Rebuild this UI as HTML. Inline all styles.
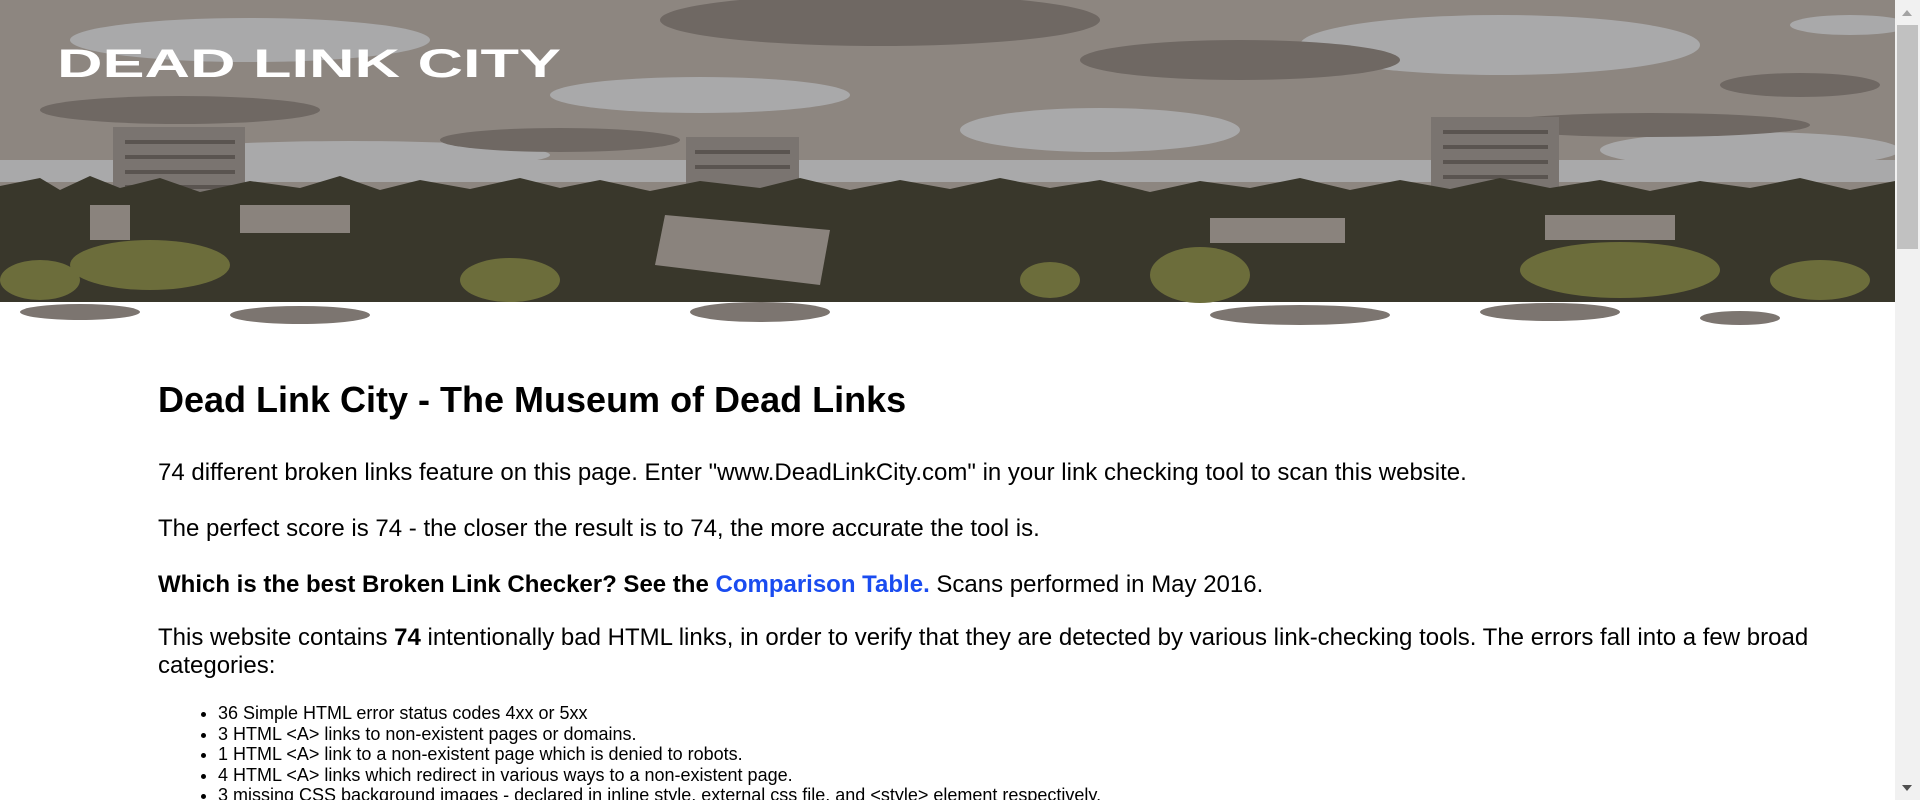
<!DOCTYPE html>
<html><head><meta charset="utf-8">
<style>
html,body{margin:0;padding:0;background:#fff;overflow:hidden}
body{width:1920px;height:800px;position:relative;font-family:"Liberation Sans",Arial,sans-serif;color:#000}
#hdr{position:absolute;left:0;top:0;width:1895px;height:335px}
#sb{position:absolute;left:1895px;top:0;width:25px;height:800px;background:#f1f1f1}
#thumb{position:absolute;left:2px;top:25px;width:21px;height:224px;background:#c1c1c1}
.au{position:absolute;left:7px;top:10px;width:0;height:0;border-left:5px solid transparent;border-right:5px solid transparent;border-bottom:6px solid #a3a3a3}
.ad{position:absolute;left:7px;top:785px;width:0;height:0;border-left:5px solid transparent;border-right:5px solid transparent;border-top:6px solid #505050}
#c{position:absolute;left:158px;top:380px;width:1700px}
h1{font-size:36px;line-height:40px;margin:0 0 39px 0;font-weight:bold}
p{font-size:24px;line-height:28px;margin:0 0 28px 0}
a{color:#1a4cf0;text-decoration:none}
ul{margin:23px 0 0 0;padding-left:60px;font-size:18px;line-height:20.5px}
li{margin:0}
</style></head><body>
<svg id="hdr" viewBox="0 0 1895 335" xmlns="http://www.w3.org/2000/svg">
<rect width="1895" height="335" fill="#fff"/>
<rect width="1895" height="200" fill="#8d8680"/>
<g fill="#a9a9aa">
<ellipse cx="250" cy="40" rx="180" ry="22"/>
<ellipse cx="1500" cy="45" rx="200" ry="30"/>
<ellipse cx="1100" cy="130" rx="140" ry="22"/>
<ellipse cx="700" cy="95" rx="150" ry="18"/>
<ellipse cx="1750" cy="150" rx="150" ry="18"/>
<ellipse cx="350" cy="155" rx="200" ry="14"/>
<ellipse cx="1850" cy="25" rx="60" ry="10"/>
<rect x="0" y="160" width="1895" height="22"/>
</g>
<g fill="#6f6863">
<ellipse cx="880" cy="20" rx="220" ry="26"/>
<ellipse cx="1240" cy="60" rx="160" ry="20"/>
<ellipse cx="180" cy="110" rx="140" ry="14"/>
<ellipse cx="1650" cy="125" rx="160" ry="12"/>
<ellipse cx="560" cy="140" rx="120" ry="12"/>
<ellipse cx="1800" cy="85" rx="80" ry="12"/>
</g>
<g fill="#7a7470">
<rect x="113" y="127" width="132" height="100"/>
<rect x="686" y="137" width="113" height="80"/>
<rect x="1431" y="117" width="128" height="110"/>
</g>
<g fill="#5a5450">
<rect x="125" y="140" width="110" height="4"/><rect x="125" y="155" width="110" height="4"/><rect x="125" y="170" width="110" height="4"/><rect x="125" y="185" width="110" height="4"/>
<rect x="1443" y="130" width="105" height="4"/><rect x="1443" y="145" width="105" height="4"/><rect x="1443" y="160" width="105" height="4"/><rect x="1443" y="175" width="105" height="4"/>
<rect x="695" y="150" width="95" height="4"/><rect x="695" y="165" width="95" height="4"/>
</g>
<path fill="#39372b" d="M0 186 L40 178 L60 190 L90 176 L120 188 L160 178 L200 192 L250 181 L300 188 L340 176 L380 190 L420 180 L470 189 L520 178 L560 188 L600 180 L650 191 L700 181 L760 188 L800 178 L850 190 L900 180 L950 189 L1000 178 L1050 188 L1100 180 L1150 192 L1200 181 L1250 188 L1300 178 L1350 190 L1400 180 L1450 189 L1500 178 L1550 188 L1600 180 L1650 191 L1700 181 L1750 188 L1800 178 L1850 190 L1895 181 L1895 302 L0 302 Z"/>
<g fill="#8a837d">
<path d="M665 215 L830 230 L820 285 L655 265 Z"/>
<rect x="240" y="205" width="110" height="28"/>
<rect x="1210" y="218" width="135" height="25"/>
<rect x="1545" y="215" width="130" height="25"/>
<rect x="90" y="205" width="40" height="35"/>
</g>
<g fill="#6c6d3b">
<ellipse cx="150" cy="265" rx="80" ry="25"/>
<ellipse cx="40" cy="280" rx="40" ry="20"/>
<ellipse cx="510" cy="280" rx="50" ry="22"/>
<ellipse cx="1200" cy="275" rx="50" ry="28"/>
<ellipse cx="1620" cy="270" rx="100" ry="28"/>
<ellipse cx="1820" cy="280" rx="50" ry="20"/>
<ellipse cx="1050" cy="280" rx="30" ry="18"/>
</g>
<g fill="#7c7570">
<ellipse cx="80" cy="312" rx="60" ry="8"/>
<ellipse cx="300" cy="315" rx="70" ry="9"/>
<ellipse cx="760" cy="312" rx="70" ry="10"/>
<ellipse cx="1300" cy="315" rx="90" ry="10"/>
<ellipse cx="1550" cy="312" rx="70" ry="9"/>
<ellipse cx="1740" cy="318" rx="40" ry="7"/>
</g>
<text x="57" y="77" font-family="Liberation Sans,sans-serif" font-size="40" font-weight="bold" fill="#fff" textLength="504" lengthAdjust="spacingAndGlyphs">DEAD LINK CITY</text>
</svg>
<div id="c">
<h1>Dead Link City - The Museum of Dead Links</h1>
<p>74 different broken links feature on this page. Enter "www.DeadLinkCity.com" in your link checking tool to scan this website.</p>
<p>The perfect score is 74 - the closer the result is to 74, the more accurate the tool is.</p>
<p style="margin-bottom:25px"><b>Which is the best Broken Link Checker? See the <a href="#">Comparison Table.</a></b> Scans performed in May 2016.</p>
<p style="margin:0">This website contains <b>74</b> intentionally bad HTML links, in order to verify that they are detected by various link-checking tools. The errors fall into a few broad categories:</p>
<ul>
<li>36 Simple HTML error status codes 4xx or 5xx</li>
<li>3 HTML &lt;A&gt; links to non-existent pages or domains.</li>
<li>1 HTML &lt;A&gt; link to a non-existent page which is denied to robots.</li>
<li>4 HTML &lt;A&gt; links which redirect in various ways to a non-existent page.</li>
<li>3 missing CSS background images - declared in inline style, external css file, and &lt;style&gt; element respectively.</li>
</ul>
</div>
<div id="sb"><div class="au"></div><div id="thumb"></div><div class="ad"></div></div>
</body></html>
